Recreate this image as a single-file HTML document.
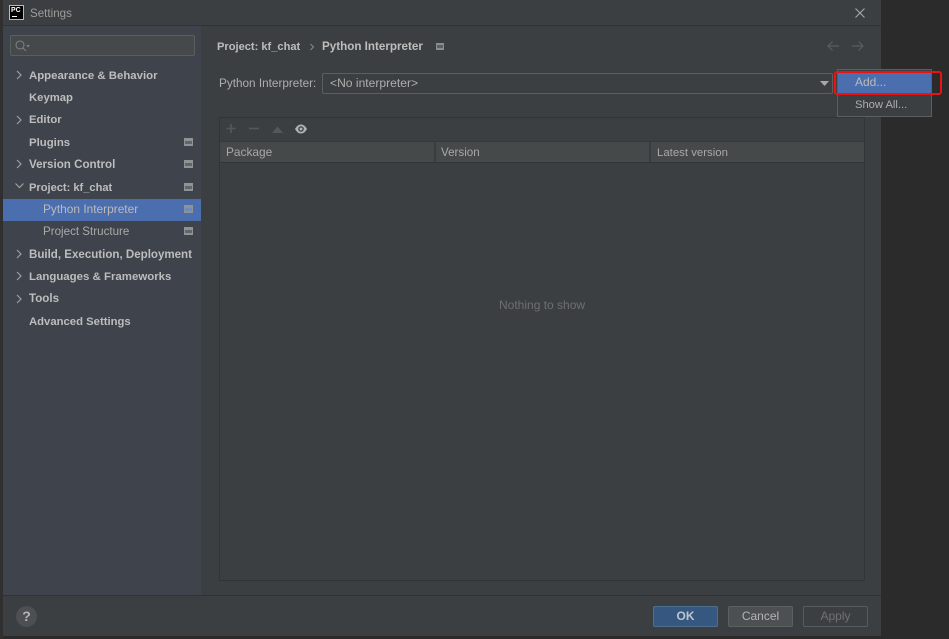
<!DOCTYPE html>
<html><head><meta charset="utf-8">
<style>
html,body{margin:0;padding:0;width:949px;height:639px;overflow:hidden;background:#2b2b2b;font-family:"Liberation Sans",sans-serif;font-size:12px;color:#b4b4b4}
#w{position:absolute;left:0;top:0;width:949px;height:639px;filter:blur(.35px)}
.a{position:absolute;white-space:nowrap}
.t{line-height:16px}
.b{font-weight:bold;color:#bdbdbd;font-size:11.4px;margin-top:1px}
svg{position:absolute;overflow:visible}
</style></head><body><div id="w">
<div class="a" style="left:0;top:0;width:3px;height:639px;background:#303030"></div>
<div class="a" style="left:3px;top:0;width:878px;height:636px;background:#3c3f41"></div>
<div class="a" style="left:3px;top:25px;width:878px;height:1px;background:#323232"></div>
<div class="a" style="left:3px;top:26px;width:198px;height:569px;background:#3e434c"></div>
<div class="a" style="left:3px;top:595px;width:878px;height:1px;background:#323232"></div>
<div class="a" style="left:881px;top:0;width:68px;height:639px;background:#2b2b2b"></div>

<!-- logo -->
<div class="a" style="left:9px;top:5px;width:15px;height:15px;background:#000;box-sizing:border-box;border:1px solid #c8c84a"></div>
<div class="a" style="left:11px;top:6px;font:bold 7px/9px 'Liberation Sans',sans-serif;color:#fff">PC</div>
<div class="a" style="left:12px;top:16px;width:5px;height:1px;background:#fff"></div>
<div class="a t" style="left:30px;top:6px;color:#9c9c9c;font-size:11.6px">Settings</div>
<svg style="left:855px;top:8px" width="10" height="10"><path d="M0.5 0.5L9.5 9.5M9.5 0.5L0.5 9.5" stroke="#a8a8a8" stroke-width="1.1" fill="none"/></svg>

<!-- search -->
<div class="a" style="left:10px;top:35px;width:185px;height:21px;box-sizing:border-box;background:#45494a;border:1px solid #5a5e5f;border-radius:2px"></div>
<svg style="left:15px;top:40px" width="16" height="12"><circle cx="5" cy="5" r="4" stroke="#7c7f81" stroke-width="1.1" fill="none"/><path d="M8 8L11 11" stroke="#7c7f81" stroke-width="1.1"/><path d="M11 5H15L13 7.5Z" fill="#7c7f81"/></svg>

<!-- tree -->
<div class="a t b" style="left:29px;top:67px">Appearance &amp; Behavior</div>
<div class="a t b" style="left:29px;top:89px;font-size:11.3px">Keymap</div>
<div class="a t b" style="left:29px;top:111px;font-size:11.3px">Editor</div>
<div class="a t b" style="left:29px;top:134px;font-size:11.4px">Plugins</div>
<div class="a t b" style="left:29px;top:156px;font-size:11.6px">Version Control</div>
<div class="a t b" style="left:29px;top:179px;font-size:11.1px">Project: kf_chat</div>
<div class="a" style="left:3px;top:199px;width:198px;height:22px;background:#4b6eaf"></div>
<div class="a t" style="left:43px;top:201px;color:#bbbbbb;font-size:11.9px">Python Interpreter</div>
<div class="a t" style="left:43px;top:224px;color:#aaaaaa;font-size:11.6px">Project Structure</div>
<div class="a t b" style="left:29px;top:246px;font-size:11.55px">Build, Execution, Deployment</div>
<div class="a t b" style="left:29px;top:268px;font-size:11.45px">Languages &amp; Frameworks</div>
<div class="a t b" style="left:29px;top:290px;font-size:11.6px">Tools</div>
<div class="a t b" style="left:29px;top:313px;font-size:11.3px">Advanced Settings</div>

<svg style="left:0;top:0" width="30" height="310" fill="none" stroke="#a0a0a0" stroke-width="1.2">
<path d="M17 71L21 75L17 79"/><path d="M17 116L21 120L17 124"/><path d="M17 160L21 164L17 168"/>
<path d="M15.500 184.500L19.500 188.500L23.500 184.500" transform="translate(0,-1)"/>
<path d="M17 250L21 254L17 258"/><path d="M17 272L21 276L17 280"/><path d="M17 295L21 299L17 303"/>
</svg>

<svg style="left:0;top:0" width="200" height="240">
<g fill="#8f9396">
<rect x="184" y="138" width="9" height="8"/><rect x="184" y="160" width="9" height="8"/><rect x="184" y="183" width="9" height="8"/><rect x="184" y="205" width="9" height="8"/><rect x="184" y="227" width="9" height="8"/>
</g>
<g fill="#62666c">
<rect x="185" y="141" width="7" height="3"/><rect x="185" y="163" width="7" height="3"/><rect x="185" y="186" width="7" height="3"/><rect x="185" y="230" width="7" height="3"/>
</g>
<rect x="185" y="208" width="7" height="3" fill="#6f8abb"/>
</svg>

<!-- breadcrumb -->
<div class="a t b" style="left:217px;top:38px;font-size:11.1px">Project: kf_chat</div>
<svg style="left:309px;top:43px" width="6" height="8" fill="none" stroke="#8a8a8a" stroke-width="1"><path d="M1.500 1L4.500 4L1.500 7"/></svg>
<div class="a t b" style="left:322px;top:38px;font-size:11.65px">Python Interpreter</div>
<svg style="left:436px;top:43px" width="8" height="8"><rect x="0" y="0" width="8" height="7" fill="#8a8d90"/><rect x="1" y="2" width="6" height="3" fill="#5c5f62"/></svg>
<svg style="left:827px;top:40px" width="38" height="12" fill="none" stroke="#5a5d5f" stroke-width="1.2"><path d="M1 6H12M5.500 1.500L1 6L5.500 10.500"/><path d="M25 6H36M31.500 1.500L36 6L31.500 10.500"/></svg>

<!-- interpreter row -->
<div class="a t" style="left:219px;top:76px;color:#aeaeae;font-size:11.75px">Python Interpreter:</div>
<div class="a" style="left:322px;top:73px;width:511px;height:21px;box-sizing:border-box;background:#3c3f41;border:1px solid #5c5f61;border-radius:2px"></div>
<div class="a t" style="left:330px;top:75px;color:#aeaeae;font-size:12.1px">&lt;No interpreter&gt;</div>
<svg style="left:820px;top:81px" width="9" height="5"><path d="M0 0H9L4.500 5Z" fill="#a8a8a8"/></svg>

<!-- table -->
<div class="a" style="left:219px;top:117px;width:646px;height:464px;box-sizing:border-box;border:1px solid #323435"></div>
<div class="a" style="left:220px;top:141px;width:644px;height:22px;box-sizing:border-box;background:#45494a;border-top:1px solid #363839;border-bottom:1px solid #323435"></div>
<div class="a" style="left:434px;top:142px;width:2px;height:20px;background:#3a3d3f"></div>
<div class="a" style="left:649px;top:142px;width:2px;height:20px;background:#3a3d3f"></div>
<div class="a t" style="left:226px;top:144px;color:#a8a8a8;font-size:11.9px">Package</div>
<div class="a t" style="left:441px;top:145px;color:#a8a8a8;font-size:11.6px">Version</div>
<div class="a t" style="left:657px;top:145px;color:#a8a8a8;font-size:11.4px">Latest version</div>
<svg style="left:226px;top:123px" width="82" height="12">
<path d="M5 1V10M0.500 5.500H9.500" stroke="#55585a" stroke-width="1.6" fill="none"/>
<path d="M23 5.500H33" stroke="#55585a" stroke-width="1.6" fill="none"/>
<path d="M46 10L51.500 3.500L57 10Z" fill="#55585a"/>
<path d="M69 6C71 2.500 73 1.500 75 1.500S79 2.500 81 6C79 9.500 77 10.500 75 10.500S71 9.500 69 6Z" fill="#afb1b3"/>
<circle cx="75" cy="6" r="2.800" fill="#3c3f41"/><circle cx="75" cy="6" r="1.500" fill="#afb1b3"/>
</svg>
<div class="a t" style="left:499px;top:297px;color:#6d6f70">Nothing to show</div>

<!-- popup -->
<div class="a" style="left:837px;top:69px;width:95px;height:48px;box-sizing:border-box;background:#3c3f41;border:1px solid #5c5f61"></div>
<div class="a" style="left:838px;top:73px;width:93px;height:20px;background:#4b6eaf"></div>
<div class="a t" style="left:855px;top:74px;color:#bbbbbb">Add...</div>
<div class="a t" style="left:855px;top:97px;color:#aeaeae;font-size:11.2px">Show All...</div>
<div class="a" style="left:834px;top:71px;width:108px;height:24px;box-sizing:border-box;border:2.5px solid #ee1111;border-radius:3px"></div>

<!-- footer -->
<div class="a" style="left:16px;top:606px;width:21px;height:21px;border-radius:50%;background:#4d5052;color:#b4b4b4;font:bold 14px/21px 'Liberation Sans',sans-serif;text-align:center">?</div>
<div class="a" style="left:653px;top:606px;width:65px;height:21px;box-sizing:border-box;background:#365880;border:1px solid #4c708c;border-radius:2px;font-weight:bold;color:#bcc6d0;text-align:center;line-height:19px">OK</div>
<div class="a" style="left:728px;top:606px;width:65px;height:21px;box-sizing:border-box;background:#4c5052;border:1px solid #5e6060;border-radius:2px;color:#b4b4b4;text-align:center;line-height:19px">Cancel</div>
<div class="a" style="left:803px;top:606px;width:65px;height:21px;box-sizing:border-box;background:#3c3f41;border:1px solid #585a5c;border-radius:2px;color:#707274;text-align:center;line-height:19px">Apply</div>
</div></body></html>
